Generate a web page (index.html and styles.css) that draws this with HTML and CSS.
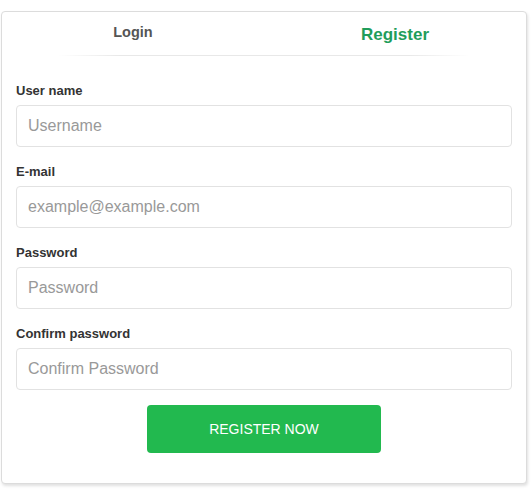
FILE: index.html
```html
<html>
<head>
<link rel="stylesheet" href="styles.css">
</head>

<body>
	<div class="page">
		<div class="card">
			<div class="tabs">
				<div class="tab">Login</div>
				<div class="tab active">Register</div>
			</div>
			<div class="divider"></div>

			<form class="form">
				<label class="label" for="username">User name</label>
				<input class="field" type="text" id="username" placeholder="Username">

				<label class="label" for="email">E-mail</label>
				<input class="field" type="text" id="email" placeholder="example@example.com">

				<label class="label" for="password">Password</label>
				<input class="field" type="password" id="password" placeholder="Password">

				<label class="label" for="confirm">Confirm password</label>
				<input class="field" type="password" id="confirm" placeholder="Confirm Password">

				<button class="submit" type="button">REGISTER NOW</button>
			</form>
		</div>
	</div>
</body>
</html>
```

FILE: styles.css
```css
body {
    margin: 0;
    background: #fff;
    font-family: "Liberation Sans", Arial, sans-serif;
}

.page {
    padding: 11px 4px 0 1px;
}

.card {
    width: 526px;
    box-sizing: border-box;
    border: 1px solid #dcdcdc;
    border-radius: 4px;
    box-shadow: 1px 2px 3px rgba(0, 0, 0, 0.12);
    background: #fff;
}

.tabs {
    display: grid;
    grid-template-columns: 1fr 1fr;
    height: 43px;
}

.tab {
    display: flex;
    align-items: center;
    justify-content: center;
    font-size: 14.5px;
    font-weight: bold;
    color: #555;
    padding-bottom: 3px;
}

.tab.active {
    font-size: 17px;
    color: #1f9d5b;
    padding-bottom: 0;
    padding-top: 2px;
}

.divider {
    height: 1px;
    margin: 0 56px;
    background: linear-gradient(to right, rgba(230,230,230,0), #e8e8e8 15%, #e8e8e8 85%, rgba(230,230,230,0));
}

.form {
    display: flex;
    flex-direction: column;
    padding: 26px 14px 30px 14px;
    margin: 0;
}

.label {
    font-size: 13px;
    line-height: 18px;
    font-weight: bold;
    color: #333;
    margin-bottom: 5px;
}

.field {
    height: 42px;
    box-sizing: border-box;
    border: 1px solid #e2e2e2;
    border-radius: 4px;
    padding: 0 11px;
    font: 16px "Liberation Sans", Arial, sans-serif;
    color: #333;
    margin-bottom: 16px;
    outline: none;
}

.field::placeholder {
    color: #999;
}

.submit {
    align-self: center;
    width: 234px;
    height: 48px;
    margin-top: -1px;
    border: 0;
    border-radius: 4px;
    background: #22b94f;
    color: #fff;
    font: 14px "Liberation Sans", Arial, sans-serif;
}
```
